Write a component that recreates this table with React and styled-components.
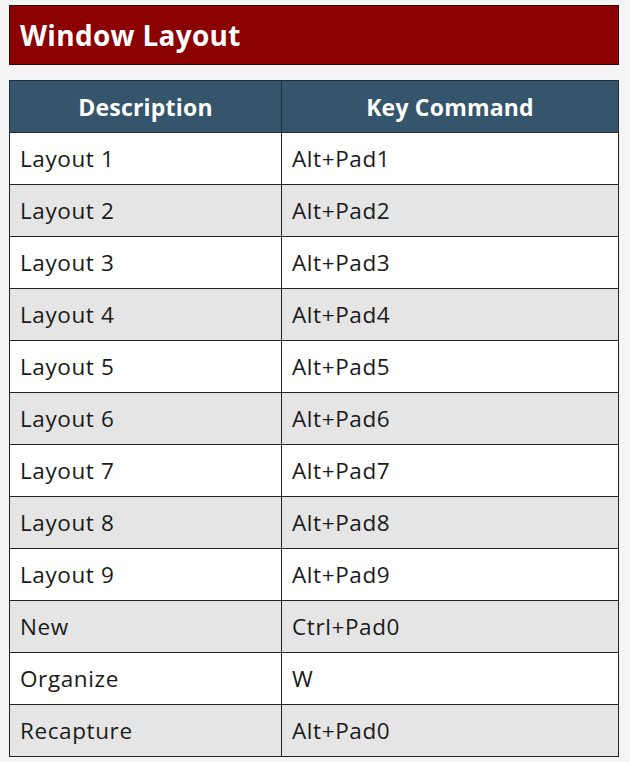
import React from 'react';
import styled, { createGlobalStyle } from 'styled-components';

const GlobalStyle = createGlobalStyle`
  body {
    margin: 0;
    background: #f4f4f4;
    font-family: "Open Sans", "Noto Sans", sans-serif;
  }
`;

const Page = styled.div`
  padding: 5px 11px 6px 9px;
  display: flex;
  flex-direction: column;
  gap: 15px;
`;

const TitleBar = styled.div`
  height: 58px;
  background: #8b0000;
  border: 1px solid #2a0a0a;
  display: flex;
  align-items: center;
  padding-left: 10px;
  h2 {
    margin: 0;
    color: #fff;
    font-size: 28px;
    font-weight: 700;
    letter-spacing: 0.3px;
  }
`;

const Table = styled.table`
  width: 100%;
  border-collapse: collapse;
  border: 1px solid #222;
  table-layout: fixed;
`;

const HeadCell = styled.th`
  height: 51px;
  padding: 0;
  background: #34556b;
  color: #fff;
  font-size: 23px;
  font-weight: 700;
  letter-spacing: 0.2px;
  text-align: center;
  border: 1px solid #1e2e3a;
  &:first-child { width: 271px; }
`;

const Row = styled.tr`
  background: ${({ $alt }) => ($alt ? '#e5e5e5' : '#ffffff')};
`;

const Cell = styled.td`
  height: 51px;
  padding: 0 0 0 10px;
  border: 1px solid #222;
  color: #1a1a1a;
  font-size: 22.5px;
  letter-spacing: 0.6px;
`;

const rows = [
  ['Layout 1', 'Alt+Pad1'],
  ['Layout 2', 'Alt+Pad2'],
  ['Layout 3', 'Alt+Pad3'],
  ['Layout 4', 'Alt+Pad4'],
  ['Layout 5', 'Alt+Pad5'],
  ['Layout 6', 'Alt+Pad6'],
  ['Layout 7', 'Alt+Pad7'],
  ['Layout 8', 'Alt+Pad8'],
  ['Layout 9', 'Alt+Pad9'],
  ['New', 'Ctrl+Pad0'],
  ['Organize', 'W'],
  ['Recapture', 'Alt+Pad0'],
];

export default function App() {
  return (
    <>
      <GlobalStyle />
      <Page>
        <TitleBar>
          <h2>Window Layout</h2>
        </TitleBar>
        <Table>
          <thead>
            <tr>
              <HeadCell>Description</HeadCell>
              <HeadCell>Key Command</HeadCell>
            </tr>
          </thead>
          <tbody>
            {rows.map(([desc, key], i) => (
              <Row key={desc} $alt={i % 2 === 1}>
                <Cell>{desc}</Cell>
                <Cell>{key}</Cell>
              </Row>
            ))}
          </tbody>
        </Table>
      </Page>
    </>
  );
}
